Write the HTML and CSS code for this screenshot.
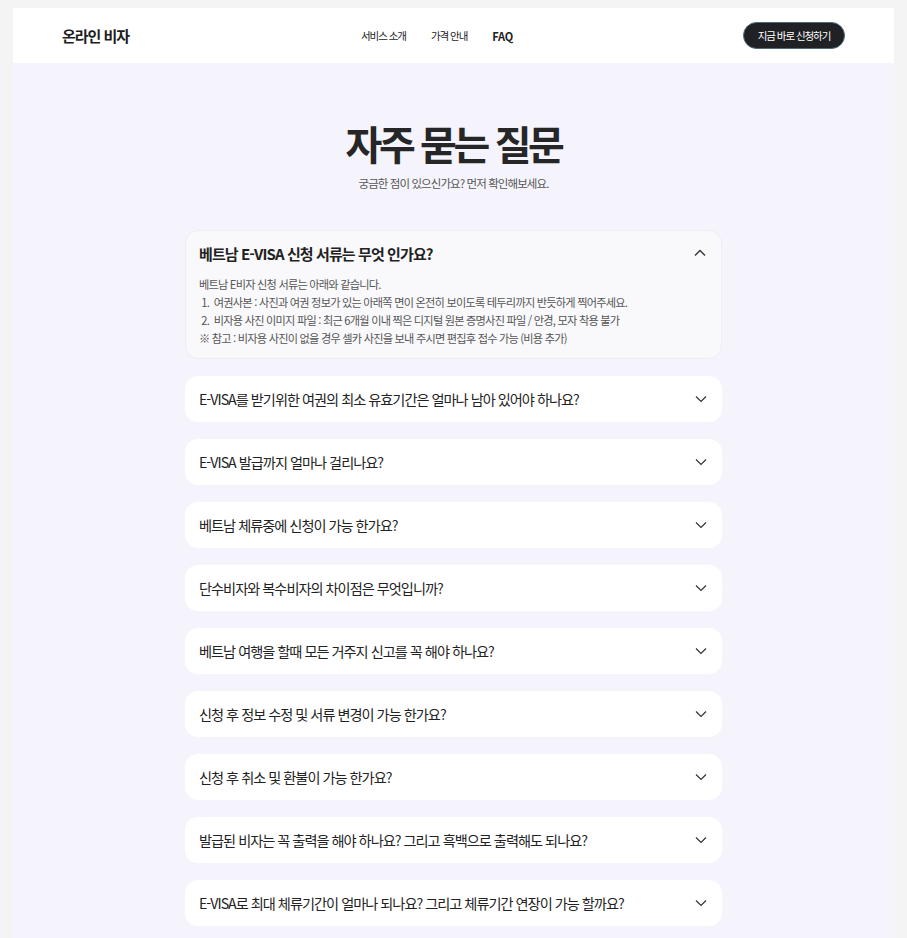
FILE: index.html
```html
<!DOCTYPE html>
<html lang="ko">
<head>
<meta charset="utf-8">
<title>자주 묻는 질문 - 온라인 비자</title>
<link rel="stylesheet" href="styles.css">
</head>
<body>
<div class="page">
  <header class="header">
    <div class="logo">온라인 비자</div>
    <nav class="nav">
      <a href="#">서비스 소개</a>
      <a href="#">가격 안내</a>
      <a href="#" class="faq-link">FAQ</a>
    </nav>
    <a href="#" class="cta">지금 바로 신청하기</a>
  </header>
  <main class="main">
    <h1 class="title">자주 묻는 질문</h1>
    <p class="subtitle">궁금한 점이 있으신가요? 먼저 확인해보세요.</p>
    <div class="faq-list">
      <div class="faq open">
        <div class="q">
          <span>베트남 E-VISA 신청 서류는 무엇 인가요?</span>
          <svg class="chev" width="12" height="8" viewBox="0 0 12 8"><path d="M1 6.5 L6 1.5 L11 6.5" fill="none" stroke="#333" stroke-width="1.4"/></svg>
        </div>
        <div class="a">
          <p>베트남 E비자 신청 서류는 아래와 같습니다.</p>
          <p>&nbsp;1.&nbsp; 여권사본 : 사진과 여권 정보가 있는 아래쪽 면이 온전히 보이도록 테두리까지 반듯하게 찍어주세요.</p>
          <p>&nbsp;2.&nbsp; 비자용 사진 이미지 파일 : 최근 6개월 이내 찍은 디지털 원본 증명사진 파일 / 안경, 모자 착용 불가</p>
          <p>※ 참고 : 비자용 사진이 없을 경우 셀카 사진을 보내 주시면 편집후 접수 가능 (비용 추가)</p>
        </div>
      </div>
      <div class="faq"><div class="q"><span>E-VISA를 받기위한 여권의 최소 유효기간은 얼마나 남아 있어야 하나요?</span><svg class="chev" width="12" height="8" viewBox="0 0 12 8"><path d="M1 1.5 L6 6.5 L11 1.5" fill="none" stroke="#333" stroke-width="1.2"/></svg></div></div>
      <div class="faq"><div class="q"><span>E-VISA 발급까지 얼마나 걸리나요?</span><svg class="chev" width="12" height="8" viewBox="0 0 12 8"><path d="M1 1.5 L6 6.5 L11 1.5" fill="none" stroke="#333" stroke-width="1.2"/></svg></div></div>
      <div class="faq"><div class="q"><span>베트남 체류중에 신청이 가능 한가요?</span><svg class="chev" width="12" height="8" viewBox="0 0 12 8"><path d="M1 1.5 L6 6.5 L11 1.5" fill="none" stroke="#333" stroke-width="1.2"/></svg></div></div>
      <div class="faq"><div class="q"><span>단수비자와 복수비자의 차이점은 무엇입니까?</span><svg class="chev" width="12" height="8" viewBox="0 0 12 8"><path d="M1 1.5 L6 6.5 L11 1.5" fill="none" stroke="#333" stroke-width="1.2"/></svg></div></div>
      <div class="faq"><div class="q"><span>베트남 여행을 할때 모든 거주지 신고를 꼭 해야 하나요?</span><svg class="chev" width="12" height="8" viewBox="0 0 12 8"><path d="M1 1.5 L6 6.5 L11 1.5" fill="none" stroke="#333" stroke-width="1.2"/></svg></div></div>
      <div class="faq"><div class="q"><span>신청 후 정보 수정 및 서류 변경이 가능 한가요?</span><svg class="chev" width="12" height="8" viewBox="0 0 12 8"><path d="M1 1.5 L6 6.5 L11 1.5" fill="none" stroke="#333" stroke-width="1.2"/></svg></div></div>
      <div class="faq"><div class="q"><span>신청 후 취소 및 환불이 가능 한가요?</span><svg class="chev" width="12" height="8" viewBox="0 0 12 8"><path d="M1 1.5 L6 6.5 L11 1.5" fill="none" stroke="#333" stroke-width="1.2"/></svg></div></div>
      <div class="faq"><div class="q"><span>발급된 비자는 꼭 출력을 해야 하나요? 그리고 흑백으로 출력해도 되나요?</span><svg class="chev" width="12" height="8" viewBox="0 0 12 8"><path d="M1 1.5 L6 6.5 L11 1.5" fill="none" stroke="#333" stroke-width="1.2"/></svg></div></div>
      <div class="faq"><div class="q"><span>E-VISA로 최대 체류기간이 얼마나 되나요? 그리고 체류기간 연장이 가능 할까요?</span><svg class="chev" width="12" height="8" viewBox="0 0 12 8"><path d="M1 1.5 L6 6.5 L11 1.5" fill="none" stroke="#333" stroke-width="1.2"/></svg></div></div>
    </div>
  </main>
</div>
</body>
</html>
```
FILE: styles.css
```css
* { box-sizing: border-box; }
html, body { margin: 0; padding: 0; }
body {
  background: #f4f4f4;
  font-family: "Noto Sans CJK KR", "Noto Sans", sans-serif;
  color: #222;
  padding: 8px 13px 0;
}
.page { background: #f5f4fc; }
.header {
  height: 55px;
  background: #fff;
  display: flex;
  align-items: center;
  padding: 0 49px;
  position: relative;
}
.logo {
  font-size: 15px;
  font-weight: 700;
  letter-spacing: -0.07em;
  color: #1e1e1e;
  flex: 1;
}
.nav {
  display: flex;
  gap: 25px;
  position: absolute;
  left: 348px;
  top: 0;
  height: 55px;
  align-items: center;
}
.nav a {
  font-size: 10.5px;
  color: #222;
  text-decoration: none;
  letter-spacing: -0.1em;
  font-weight: 400;
}
.nav a.faq-link { font-weight: 700; letter-spacing: -0.02em; font-size: 11px; }
.cta {
  background: #1f2124;
  color: #fff;
  text-decoration: none;
  font-size: 10.5px;
  letter-spacing: -0.1em;
  font-weight: 400;
  height: 27px;
  width: 102px;
  display: flex;
  align-items: center;
  justify-content: center;
  border-radius: 14px;
  border: 1px solid #4e6a76;
}
.main {
  padding: 54px 0 40px;
  display: flex;
  flex-direction: column;
  align-items: center;
}
.title {
  margin: 0;
  font-size: 40px;
  font-weight: 700;
  letter-spacing: -0.085em;
  color: #262626;
  line-height: 52px;
}
.subtitle {
  margin: 6px 0 39px;
  font-size: 11.5px;
  color: #555;
  letter-spacing: -0.08em;
  line-height: 16px;
}
.faq-list {
  width: 537px;
  display: flex;
  flex-direction: column;
  gap: 17px;
}
.faq {
  background: #fff;
  border-radius: 13px;
}
.faq.open {
  background: #f9f9fb;
  border: 1px solid #eeeef2;
  padding-bottom: 11px;
}
.q {
  height: 46px;
  display: flex;
  align-items: center;
  justify-content: space-between;
  padding: 0 15px 0 14px;
  font-size: 14.2px;
  font-weight: 400;
  letter-spacing: -0.07em;
  color: #222;
}
.faq.open .q {
  height: 44px;
  padding-left: 13px;
  font-weight: 700;
  font-size: 15px;
  letter-spacing: -0.06em;
}
.a {
  padding: 0 13px;
  font-size: 11.2px;
  color: #555;
  letter-spacing: -0.07em;
  line-height: 18px;
}
.a p { margin: 0; }
.chev { flex: none; }
```
